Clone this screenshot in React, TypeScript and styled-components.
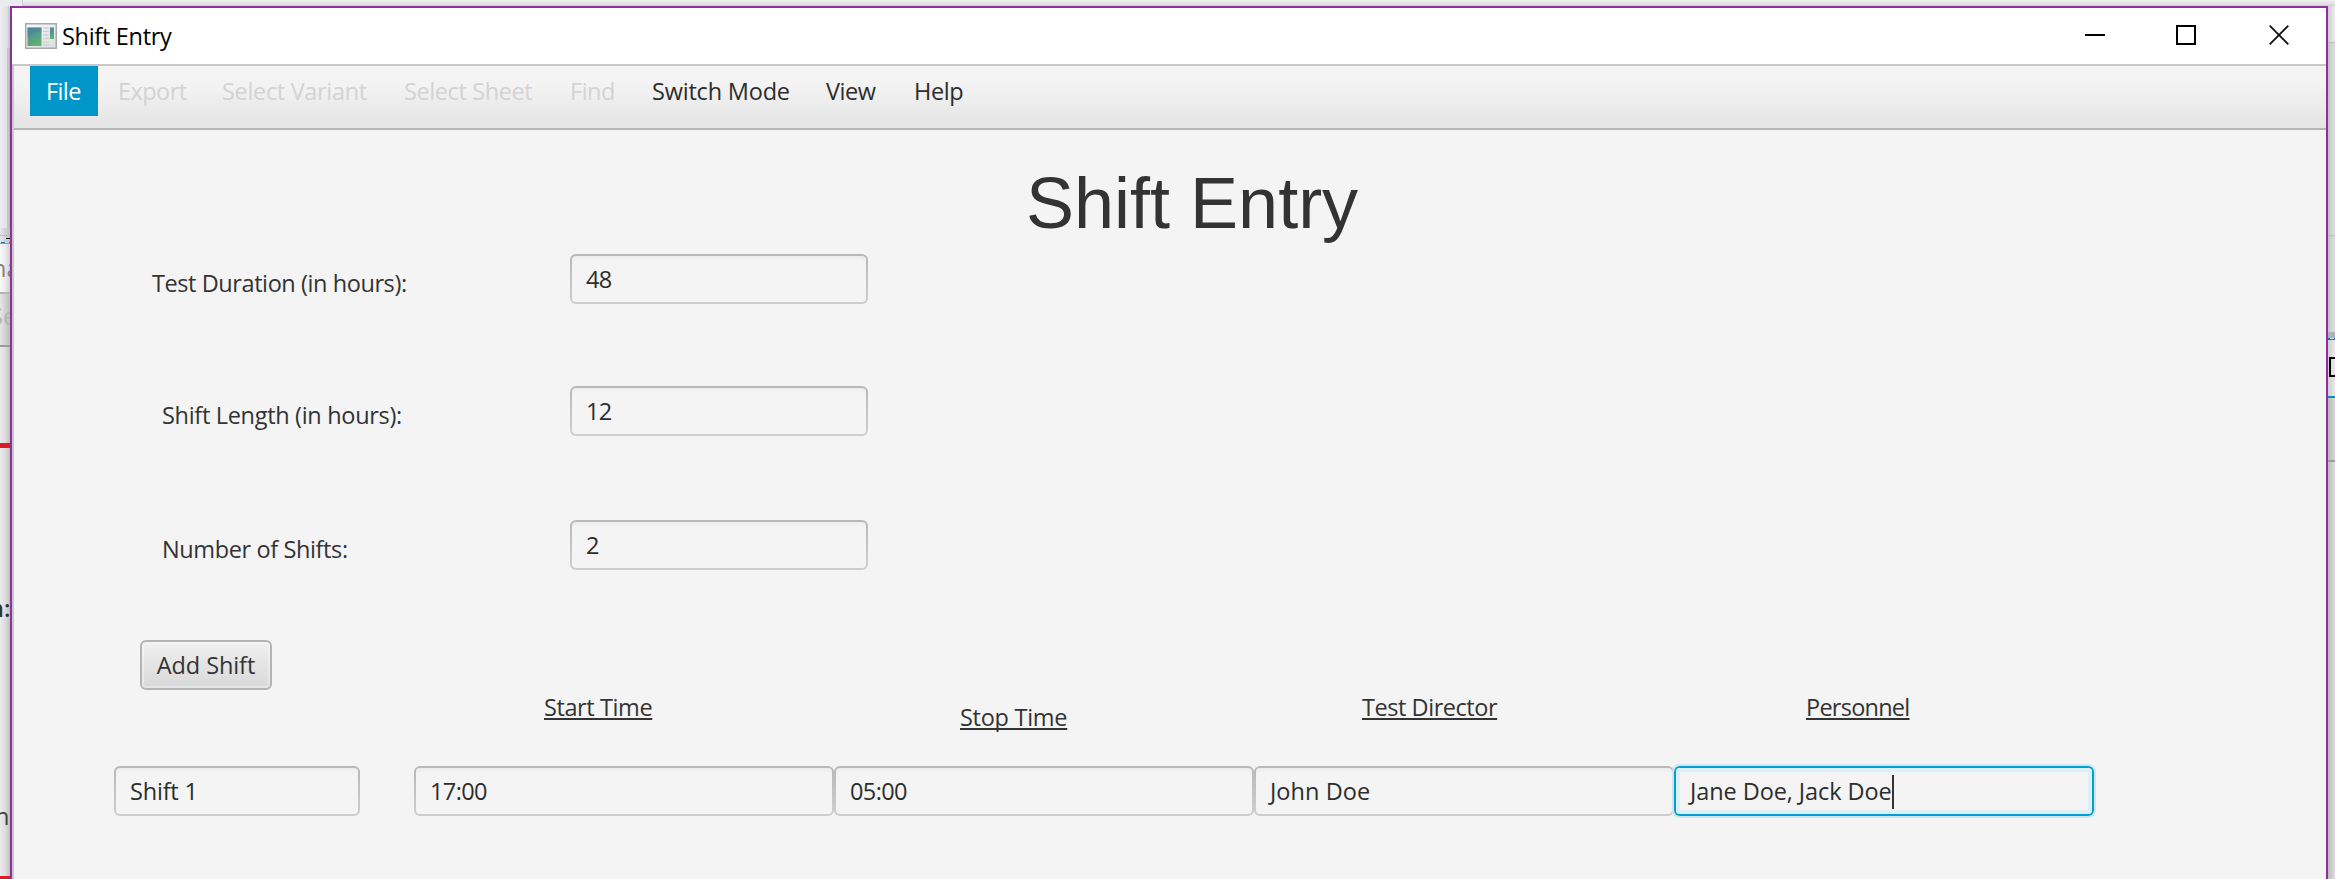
import React from "react";
import styled, { createGlobalStyle } from "styled-components";

const Global = createGlobalStyle`
  * { box-sizing: border-box; }
  html, body { margin: 0; padding: 0; width: 2335px; height: 879px; overflow: hidden; }
  body { font-family: "Open Sans", "Noto Sans", sans-serif; font-size: 23.5px; line-height: 32px; color: #333; }
`;

const Desktop = styled.div`
  width: 2335px; height: 879px; display: grid;
  grid-template-columns: 10px 2318px 7px;
  grid-template-rows: 6px 873px;
  background: #dcdddd;
`;
const TopStrip = styled.div`
  grid-column: 1 / -1;
  background: linear-gradient(90deg, #e9ebee 22px, #cfcfcf 22px, #cfcfcf 23px, transparent 23px),
    linear-gradient(#f1f1f1, #e6e6e6 3px, #d2d2d2);
`;
const Side = styled.div`display: flex; flex-direction: column; overflow: hidden; min-width: 0;`;
const Slice = styled.div<{ $h: number; $bg: string; $up?: number }>`
  flex: none; height: ${p => p.$h}px; background: ${p => p.$bg};
  overflow: hidden; white-space: nowrap; display: flex; align-items: center;
  padding-bottom: ${p => p.$up ?? 0}px;
`;
const Peek = styled.span<{ $c: string; $bold?: boolean; $s?: number }>`
  color: ${p => p.$c}; font-weight: ${p => (p.$bold ? 600 : 400)};
  margin-left: ${p => p.$s ?? 0}px;
`;
const PeekBox = styled.i`
  flex: none; width: 20px; height: 20px; margin-left: 1px; border: 2px solid #000;
`;

const Window = styled.div`
  border: 2px solid #912d9f; border-bottom: 0; background: #f4f4f4;
  display: flex; flex-direction: column; min-width: 0;
`;
const TitleBar = styled.div`
  height: 56px; flex: none; background: #fff; color: #000;
  display: flex; align-items: center; padding: 0 37px 0 13px;
`;
const Txt = styled.span<{ $ls?: number }>`
  white-space: pre; letter-spacing: ${p => p.$ls ?? -0.6}px;
`;
const TitleText = styled(Txt)`margin-left: 5px; flex: 1;`;
const Controls = styled.div`
  display: flex; gap: 73px; align-items: center; padding-bottom: 2px;
  & > :first-child { margin-right: -2px; }
`;
const Client = styled.div`
  flex: 1; border-top: 2px solid #c8c8c8; border-left: 2px solid #c8c8c8;
  display: flex; flex-direction: column;
`;
const MenuBar = styled.div`
  height: 64px; flex: none; border-bottom: 2px solid #b5b5b5;
  background: linear-gradient(#f4f4f4 0%, #f3f3f3 30%, #e4e4e4 100%);
  display: flex; padding-left: 16px;
`;
const MenuItem = styled.div<{ $w: number; $active?: boolean; $disabled?: boolean }>`
  width: ${p => p.$w}px; height: 50px; padding: 9px 0 0 16px;
  background: ${p => (p.$active ? "#0096c9" : "transparent")};
  color: ${p => (p.$active ? "#fff" : p.$disabled ? "#d3d3d3" : "#2d2d2d")};
  margin-right: ${p => (p.$active ? 4 : 0)}px;
`;
const Heading = styled.h1`
  margin: 33px 0 0 1012px; height: 91px; font: 400 72px/80px "Liberation Sans", Arial, sans-serif;
  color: #333; white-space: nowrap;
`;
const Form = styled.div`display: flex; flex-direction: column;`;
const FormRow = styled.div<{ $h: number; $in: number }>`
  height: ${p => p.$h}px; display: grid; grid-template-columns: 556px 298px; align-items: start;
  & > label { padding: 13px 0 0 ${p => p.$in}px; }
`;
const Field = styled.div<{ $w: number; $focus?: boolean }>`
  width: ${p => p.$w}px; height: 50px; flex: none; border-radius: 6px; padding: 2px;
  background: ${p => (p.$focus ? "#039ed3" : "linear-gradient(#b8b8b8, #cecece)")};
  box-shadow: ${p => (p.$focus ? "0 0 0 2px #cde6ef" : "none")};
`;
const FieldInner = styled.div<{ $focus?: boolean }>`
  height: 46px; border-radius: 4px; padding: 7px 0 0 14px; color: #2d2d2d;
  display: flex;
  background: ${p => (p.$focus ? "#f4f4f4" : "linear-gradient(#ececec, #f4f4f4 5px)")};
  box-shadow: ${p => (p.$focus ? "inset 0 0 0 4px #dcf1f7" : "none")};
`;
const Caret = styled.i`width: 2px; height: 34px; background: #333; flex: none;`;
const AddButton = styled.button`
  width: 132px; height: 50px; margin: 0 0 0 126px; padding: 0 0 1px; flex: none;
  border: 2px solid #b4b4b4; border-radius: 6px; font: inherit; color: #333;
  background: linear-gradient(#f0f0f0, #d9d9d9);
  box-shadow: inset 0 0 0 2px rgba(255,255,255,.35);
`;
const HeadRow = styled.div`
  height: 76px; display: grid; padding: 1px 0 0 530px;
  grid-template-columns: 416px 402px 444px 200px; align-items: start;
`;
const Head = styled(Txt)<{ $drop?: boolean }>`
  justify-self: start; padding-top: ${p => (p.$drop ? 10 : 0)}px;
  text-decoration: underline; text-decoration-thickness: 2px; text-underline-offset: 2px;
  text-decoration-skip-ink: none;
`;
const ShiftRow = styled.div`display: flex; padding-left: 100px; & > :first-child { margin-right: 54px; }`;

const menu = [
  { t: "File", w: 68, active: true, ls: -0.6 },
  { t: "Export", w: 104, disabled: true, ls: -0.55 },
  { t: "Select Variant", w: 182, disabled: true, ls: -0.33 },
  { t: "Select Sheet", w: 166, disabled: true, ls: -0.4 },
  { t: "Find", w: 82, disabled: true, ls: -0.5 },
  { t: "Switch Mode", w: 174, ls: -0.2 },
  { t: "View", w: 88, ls: -0.5 },
  { t: "Help", w: 90, ls: -0.4 },
];
const fields = [
  { l: "Test Duration (in hours):", v: "48", h: 132, x: 138, ls: -0.42 },
  { l: "Shift Length (in hours):", v: "12", h: 134, x: 148, ls: -0.31 },
  { l: "Number of Shifts:", v: "2", h: 120, x: 148, ls: -0.38 },
];
const heads = [
  { t: "Start Time", ls: -0.4 },
  { t: "Stop Time", ls: -0.27, drop: true },
  { t: "Test Director", ls: -0.45 },
  { t: "Personnel", ls: -0.75 },
];
const shift = [
  { t: "Shift 1", w: 246, ls: -0.2 },
  { t: "17:00", w: 420, ls: -0.6 },
  { t: "05:00", w: 420, ls: -0.6 },
  { t: "John Doe", w: 420, ls: 0.05 },
  { t: "Jane Doe, Jack Doe", w: 420, ls: -0.08, focus: true },
];

const leftShade = "linear-gradient(90deg,#ebebeb,#dadada 6px,#bdbdbd)";
const rightShade = "linear-gradient(90deg,#c0c1c2,#d2d3d4 3px,#dcddde)";

function TextField({ text, w, ls, focus }: { text: string; w: number; ls: number; focus?: boolean }) {
  return (
    <Field $w={w} $focus={focus}>
      <FieldInner $focus={focus}><Txt $ls={ls}>{text}</Txt>{focus && <Caret />}</FieldInner>
    </Field>
  );
}

function AppIcon() {
  return (
    <svg width="32" height="26" viewBox="0 0 32 26">
      <defs>
        <linearGradient id="pane" x1="0" y1="0" x2="0.4" y2="1">
          <stop offset="0" stopColor="#4c7fa6" /><stop offset="1" stopColor="#5fb070" />
        </linearGradient>
        <linearGradient id="frame" x1="0" y1="0" x2="1" y2="1">
          <stop offset="0" stopColor="#fafafa" /><stop offset="1" stopColor="#dcdee0" />
        </linearGradient>
      </defs>
      <rect x="0.75" y="0.75" width="30.5" height="24.5" fill="url(#frame)" stroke="#a3a9af" strokeWidth="1.5" />
      <rect x="2.5" y="4.5" width="14" height="18.5" fill="url(#pane)" />
      <path d="M2.5 14Q6 9 16.5 8.5V4.5H2.5Z" fill="#4e86a8" opacity=".5" />
      <path d="M18 5h6M18 8.5h6M18 12h6M18 15.5h6M18 19h6M18 22h6" stroke="#cfd2d4" strokeWidth="1.5" />
      <rect x="25" y="4.5" width="4" height="11.5" fill="url(#pane)" />
    </svg>
  );
}

export default function App() {
  return (
    <>
      <Global />
      <Desktop>
        <TopStrip />
        <Side>
          <Slice $h={42} $bg="linear-gradient(90deg,#edeff2,#dfe1e3 7px,#c0c1c3)" />
          <Slice $h={180} $bg="linear-gradient(90deg,#edeff2,#dfe1e3 7px,#c5c7c9 7px,#c5c7c9 9px,#b5b5b5 9px)" />
          <Slice $h={7} $bg="linear-gradient(90deg,#e6e8ea,#bcbdbf)" />
          <Slice $h={1} $bg="#b9babb" />
          <Slice $h={2} $bg="linear-gradient(90deg,#e6e8ea,#bcbdbf)" />
          <Slice $h={1} $bg="linear-gradient(90deg,#e0e2e4 6px,#000 6px)" />
          <Slice $h={3} $bg="linear-gradient(90deg,#e6e8ea,#bcbdbf)" />
          <Slice $h={1} $bg="linear-gradient(90deg,#e0e2e4 1px,#0a78c8 1px,#0a78c8 5px,#d8dadc 5px,#d8dadc 9px,#0a78c8 9px)" />
          <Slice $h={1} $bg="#9a9a9a" />
          <Slice $h={48} $bg="linear-gradient(90deg,#fafafa,#e8e8e8 6px,#cfcfcf)"><Peek $c="#8c8078" $s={-8}>na</Peek></Slice>
          <Slice $h={2} $bg="#b4b4b4" />
          <Slice $h={51} $up={8} $bg="linear-gradient(90deg,#e7e7e7,#bdbdbd)"><Peek $c="#b4b4b4" $s={-10}>Se</Peek></Slice>
          <Slice $h={2} $bg="#9a9a9a" />
          <Slice $h={96} $bg={leftShade} />
          <Slice $h={5} $bg="#dc1c22" />
          <Slice $h={142} $bg={leftShade} />
          <Slice $h={36} $bg={leftShade}><Peek $c="#333" $bold $s={-11}>n:</Peek></Slice>
          <Slice $h={160} $bg={leftShade} />
          <Slice $h={60} $bg={leftShade}><Peek $c="#444" $s={-5}>n</Peek></Slice>
          <Slice $h={30} $bg={leftShade} />
          <Slice $h={3} $bg="#dc1c22" />
        </Side>
        <Window>
          <TitleBar>
            <AppIcon />
            <TitleText $ls={-0.3}>Shift Entry</TitleText>
            <Controls>
              <svg width="20" height="20"><path d="M0 10H20" stroke="#000" strokeWidth="2" /></svg>
              <svg width="20" height="20"><rect x="1" y="1" width="18" height="18" fill="none" stroke="#000" strokeWidth="2" /></svg>
              <svg width="20" height="20"><path d="M0.7 0.7L19.3 19.3M19.3 0.7L0.7 19.3" stroke="#111" strokeWidth="1.8" /></svg>
            </Controls>
          </TitleBar>
          <Client>
            <MenuBar>
              {menu.map(m => (
                <MenuItem key={m.t} $w={m.w} $active={m.active} $disabled={m.disabled}><Txt $ls={m.ls}>{m.t}</Txt></MenuItem>
              ))}
            </MenuBar>
            <Heading>Shift Entry</Heading>
            <Form>
              {fields.map(f => (
                <FormRow key={f.l} $h={f.h} $in={f.x}>
                  <label><Txt $ls={f.ls}>{f.l}</Txt></label>
                  <TextField text={f.v} w={298} ls={-0.6} />
                </FormRow>
              ))}
            </Form>
            <AddButton><Txt $ls={-0.1}>Add Shift</Txt></AddButton>
            <HeadRow>
              {heads.map(h => <Head key={h.t} $ls={h.ls} $drop={h.drop}>{h.t}</Head>)}
            </HeadRow>
            <ShiftRow>
              {shift.map(s => <TextField key={s.t} text={s.t} w={s.w} ls={s.ls} focus={s.focus} />)}
            </ShiftRow>
          </Client>
        </Window>
        <Side>
          <Slice $h={36} $bg="linear-gradient(90deg,#cdcdcd,#ececec)" />
          <Slice $h={1} $bg="#b9babb" />
          <Slice $h={192} $bg={rightShade} />
          <Slice $h={1} $bg="#b9babb" />
          <Slice $h={96} $bg={rightShade} />
          <Slice $h={1} $bg="#b4b4b4" />
          <Slice $h={5} $bg="#a9b2bf" />
          <Slice $h={1} $bg="linear-gradient(90deg,#0a78c8 2px,#e4e4e4 2px,#e4e4e4 6px,#0a78c8 6px)" />
          <Slice $h={1} $bg="#8a3a98" />
          <Slice $h={56} $up={2} $bg="linear-gradient(90deg,#cfcfcf,#e8e8e8)"><PeekBox /></Slice>
          <Slice $h={2} $bg="#0a8cbc" />
          <Slice $h={62} $bg="linear-gradient(90deg,#b9b9b9,#d6d6d6)" />
          <Slice $h={2} $bg="#9c9c9c" />
          <Slice $h={417} $bg="linear-gradient(90deg,#bcbcbc,#dcdcdc)" />
        </Side>
      </Desktop>
    </>
  );
}
